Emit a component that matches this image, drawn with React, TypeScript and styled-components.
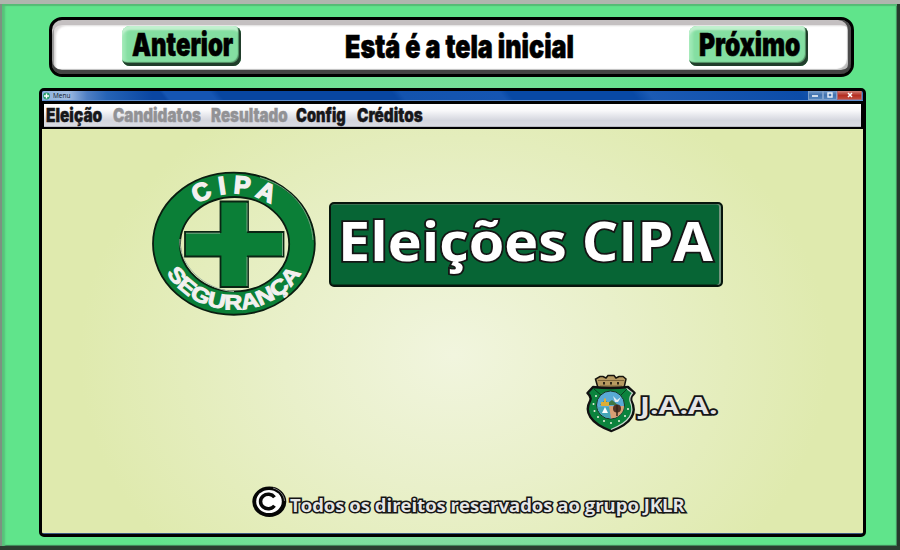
import React, { ReactNode, useLayoutEffect, useRef, useState } from 'react';
import styled, { createGlobalStyle } from 'styled-components';

const GlobalStyle = createGlobalStyle`
  * { box-sizing: border-box; }
  body { margin: 0; overflow: hidden; font-family: 'Open Sans', sans-serif; }
`;

const Page = styled.div`
  width: 900px;
  height: 550px;
  padding: 17px 34px 0 39px;
  background: radial-gradient(ellipse 400px 310px at 440px 330px, #a3d9b4 0%, #93d9ab 50%, #60e48b 100%);
  box-shadow: inset 0 4px 0 #b0b5ae, inset 0 -4px 0 #2b3d30, inset -3px 0 0 #26392b,
    inset 2px 0 0 #7b9381, inset 0 6px 1px #55bb75, inset 5px 0 2px #58c17a,
    inset 0 -5px 1px #3f7f55, inset -4px 0 1px #43885a;
`;

const Banner = styled.header`
  width: 805px;
  height: 60px;
  margin-left: 10px;
  padding: 6px 43px 0 70px;
  display: flex;
  justify-content: space-between;
  border: 3px solid #000;
  border-radius: 13px;
  background: #fff;
  box-shadow: inset 0 -4px 0 #434343, inset -3px 0 0 #4b4b4b, inset 0 5px 0 #c4c0c1,
    inset 2px 0 1px #969696, inset -4px -5px 1px #bdbdbd, inset 4px 6px 2px #dedcdc;
`;

const BevelButton = styled.button`
  width: 119px;
  height: 40px;
  padding: 0 0 3px 10px;
  border: 0;
  border-radius: 8px;
  text-align: left;
  background: #84dea1;
  box-shadow: inset -2px -3px 0 #213d2b, inset -3px -4px 1px #4d895f,
    inset 0 4px 2px #c1f0cf, inset 4px 0 3px #9ce8b4;
`;

const BannerTitle = styled.h1`
  margin: 3px 0 0 -12px;
  padding-top: 2px;
  width: 228px;
  line-height: 0;
`;

const FitBox = styled.span<{ $width: number; $size: number; $line: number }>`
  display: block;
  flex: none;
  width: ${p => p.$width}px;
  height: ${p => p.$line}px;
  line-height: ${p => p.$line}px;
  font-size: ${p => p.$size}px;
  white-space: nowrap;
`;

const FitInner = styled.span`
  display: inline-block;
  transform-origin: 0 50%;
`;

function Fit({ width, size, line, children }: { width: number; size: number; line: number; children: ReactNode }) {
  const ref = useRef<HTMLSpanElement>(null);
  const [scale, setScale] = useState(1);
  useLayoutEffect(() => {
    if (ref.current) setScale(width / ref.current.offsetWidth);
  }, [width, children]);
  return (
    <FitBox $width={width} $size={size} $line={line}>
      <FitInner ref={ref} style={{ transform: `scaleX(${scale})` }}>{children}</FitInner>
    </FitBox>
  );
}

const Heavy = styled.span`
  display: block;
  font-family: Inter, sans-serif;
  font-weight: 900;
  color: #000;
  -webkit-text-stroke: 0.6px #000;
`;

const Window = styled.main`
  width: 827px;
  height: 449px;
  margin-top: 11px;
  border: 3px solid #000;
  border-radius: 5px;
  background: #000;
  overflow: hidden;
`;

const TitleBar = styled.div`
  height: 10px;
  display: flex;
  align-items: center;
  padding-left: 1px;
  border-bottom: 1px solid #5f8fd0;
  background: linear-gradient(90deg, #8fb2df 0, #9fbce2 26px, #4f7fc4 45px, #2563b5 65px, transparent 110px),
    linear-gradient(52deg, #0a46a2 15%, #1555b2 15.5%, #1555b2 21%, #0846a1 22%, #0846a1 43%, #1353ae 44%,
      #1555b2 56%, #0849a5 57%, #0849a5 72%, #1b5ab4 74%, #0c4ca8 92%, #3c73bd 100%);
`;

const WindowName = styled.span`
  margin-left: 3px;
  flex: 1;
  font: 6.5px/9px 'Open Sans', sans-serif;
  color: #101828;
`;

const WindowControl = styled.span<{ $close?: boolean }>`
  width: ${p => (p.$close ? 25 : 14.5)}px;
  height: 9px;
  display: grid;
  place-items: center;
  align-self: flex-start;
  border: 1px solid ${p => (p.$close ? '#a96a78' : '#7da0cc')};
  border-top: 0;
  background: ${p => (p.$close ? 'linear-gradient(#cf8178, #b52e22 55%, #c04b3c)' : 'linear-gradient(#769dcc, #3f70ad 50%, #5385bd)')};
`;

const ControlEnd = styled.span`
  width: 1px;
`;

const MenuBar = styled.nav`
  height: 23px;
  margin: 3px 2px 2px 2px;
  padding: 0 0 0 2px;
  display: flex;
  border-bottom: 1px solid #b9bbc4;
  background: linear-gradient(#fff 0, #f8f8fa 30%, #d4d6de 75%, #dadbe2 100%);
`;

const MenuItem = styled.a<{ $disabled?: boolean; $gap: number }>`
  display: block;
  margin-right: ${p => p.$gap}px;
  font-family: Inter, sans-serif;
  font-weight: 900;
  color: ${p => (p.$disabled ? '#929295' : '#17171a')};
  -webkit-text-stroke: 0.4px currentColor;
`;

const Content = styled.section`
  height: 405px;
  padding: 42px 0 0 109px;
  border-bottom: 1px solid #3c5a83;
  background: radial-gradient(ellipse 375px 300px at 412px 226px, #f1f5de 0%, #e9f0ca 45%, #dfeaae 100%);
`;

const Hero = styled.div`
  display: flex;
  align-items: flex-start;
`;

const Plate = styled.div`
  width: 394px;
  height: 85px;
  margin: 31px 0 0 12px;
  padding: 4px 0 0 7px;
  border: 2px solid #07150c;
  border-radius: 5px;
  background: #076535;
  box-shadow: inset -2px 0 0 #74957f, inset 0 1px 0 #396f50, inset 0 -1px 0 #064021;
`;

const OutlinedText = styled.span<{ $stroke: number; $fill: string; $bold: number }>`
  display: block;
  font-family: 'Open Sans', sans-serif;
  font-weight: ${p => p.$bold};
  color: ${p => p.$fill};
  -webkit-text-stroke: ${p => p.$stroke}px #151515;
  paint-order: stroke fill;
`;

const Team = styled.div`
  display: flex;
  margin: 57px 0 0 435px;
  gap: 3px;
`;

const TeamName = styled.div`
  padding-top: 16px;
`;

const Footer = styled.footer`
  display: flex;
  gap: 3px;
  margin: 53px 0 0 101px;
`;

const FooterText = styled.div`
  padding-top: 7px;
`;

function SafetyLogo() {
  return (
    <svg width="166" height="146" viewBox="151 171 166 146">
      <defs>
        <path id="arcTop" d="M181 219.500 A60 49.5 0 0 1 286.6 219.500" />
        <path id="arcBottom" d="M162 263 A75.5 67.5 0 0 0 305.6 263" />
      </defs>
      <path
        fillRule="evenodd"
        fill="#0b7f37"
        stroke="#0a1d10"
        strokeWidth="1.8"
        d="M153 243.7a80.9 71 0 1 0 161.8 0a80.9 71 0 1 0-161.8 0ZM180 244.2a54.6 47.2 0 1 0 109.2 0a54.6 47.2 0 1 0-109.2 0Z"
      />
      <path d="M260 177.500C293 187 311 212 313 240" fill="none" stroke="#6f9d7b" strokeWidth="1" />
      <path d="M180 239C178 264 204 290 234 291.500" fill="none" stroke="#a5b9a5" strokeWidth="1" />
      <path d="M220.500 201.500H248V232H283.500V256.500H248V287H220.500V256.500H185V232H220.500Z" fill="#0b7f37" stroke="#0a2513" strokeWidth="1.800" />
      <path d="M247 203V231.500M282.500 233V256M247 257V286M186 233.200H220" fill="none" stroke="#79a584" strokeWidth="1" />
      <g fill="#f3f0ef" stroke="#f3f0ef" strokeWidth="1.5" fontFamily="'Liberation Sans', sans-serif" fontWeight="700" fontSize="25">
        <text textAnchor="middle" textLength="78" lengthAdjust="spacing">
          <textPath href="#arcTop" startOffset="50%">CIPA</textPath>
        </text>
        <text textAnchor="middle" fontSize="21" strokeWidth="0.9" textLength="160" lengthAdjust="spacingAndGlyphs">
          <textPath href="#arcBottom" startOffset="50%">SEGURANÇA</textPath>
        </text>
      </g>
    </svg>
  );
}

function Shield() {
  return (
    <svg width="51" height="59" viewBox="586 374 51 59">
      <path d="M598 388 595.500 379 600 376.500H603L606 378 608 375.500H614L616 378 619 376.500H623L626 379 624 388Z" fill="#b69a61" stroke="#17140d" strokeWidth="1.500" />
      <path d="M598 380.500H624M600 386H622" stroke="#7c6439" strokeWidth="1" />
      <path d="M604 382v2.500M611 382v2.500M618 382v2.500" stroke="#211a10" strokeWidth="1.800" />
      <path d="M593 387Q611 389 628 387L634.500 393Q630 397 631.500 401C637 412 633 423 611 431C590 423 584 412 590 401Q592 397 587.500 393Z" fill="#0b833d" stroke="#111" strokeWidth="2.400" strokeLinejoin="round" />
      <path d="M626.500 388.500L632.500 393Q629 397 630 401C635 413 630 422 611 429.500" fill="none" stroke="#c8d4cc" strokeWidth="1.200" />
      <path d="M594 389 602 396M627 389 620 396" stroke="#07401e" strokeWidth="1" />
      <circle cx="610.500" cy="405" r="14" fill="#59aad6" stroke="#18331f" strokeWidth="1" />
      <path d="M597.500 407H611V418.500C604 418 598 413 597.500 407Z" fill="#46a6b8" />
      <path d="M609 406H624C624 412 619 418 611 418.500Z" fill="#d99f74" />
      <path d="M600 405 605 400 608 403 612 400 618 405Z" fill="#407944" />
      <path d="M601 406V402H604V398.500H606V402H609V406Z" fill="#dcae38" />
      <path d="M613 396 617 400 621 397 618 402H615Z" fill="#e6edf0" />
      <circle cx="617" cy="408.500" r="4" fill="#513326" />
      <path d="M617 405V416" stroke="#352419" strokeWidth="1.500" />
      <path d="M602 413 605 407 608 413Z" fill="#fff" />
      <g fill="#e9f2df">
        <circle cx="596" cy="396" r="1" /><circle cx="593.500" cy="404" r="1" />
        <circle cx="594.500" cy="411" r="1" /><circle cx="598" cy="417" r="1" />
        <circle cx="604" cy="421" r="1" /><circle cx="611" cy="423" r="1" />
        <circle cx="619" cy="421" r="1" /><circle cx="625" cy="416" r="1" />
        <circle cx="628" cy="409" r="1" />
      </g>
    </svg>
  );
}

function CopyrightMark() {
  return (
    <svg width="35" height="32" viewBox="0 0 35 32">
      <ellipse cx="17.300" cy="15.700" rx="17" ry="15.300" fill="#050505" />
      <ellipse cx="17" cy="15.500" rx="12.800" ry="11.500" fill="#fff" />
      <path d="M22.500 11.300A7.700 7.200 0 1 0 22.500 19.700" fill="none" stroke="#080808" strokeWidth="3.500" />
      <path d="M21 2C28 4 32 9 32.500 15" fill="none" stroke="#8b8b8b" strokeWidth=".9" />
    </svg>
  );
}

const menu = [
  { label: 'Eleição', width: 56, gap: 11 },
  { label: 'Candidatos', width: 88, gap: 10, disabled: true },
  { label: 'Resultado', width: 77, gap: 8, disabled: true },
  { label: 'Config', width: 50, gap: 11 },
  { label: 'Créditos', width: 66, gap: 0 },
];

export default function App() {
  return (
    <Page>
      <GlobalStyle />
      <Banner>
        <BevelButton><Heavy><Fit width={101} size={32} line={31}>Anterior</Fit></Heavy></BevelButton>
        <BannerTitle><Heavy><Fit width={229} size={32} line={31}>Está é a tela inicial</Fit></Heavy></BannerTitle>
        <BevelButton><Heavy><Fit width={101} size={32} line={31}>Próximo</Fit></Heavy></BevelButton>
      </Banner>
      <Window>
        <TitleBar>
          <svg width="7" height="8" viewBox="0 0 7 8">
            <circle cx="3.500" cy="4" r="3.400" fill="#259e68" />
            <path d="M3.500 1.500V6.500M1 4H6" stroke="#fff" strokeWidth="1.400" />
          </svg>
          <WindowName>Menu</WindowName>
          <WindowControl><svg width="6" height="6"><path d="M0 4H6" stroke="#fff" strokeWidth="1.600" /></svg></WindowControl>
          <WindowControl><svg width="6" height="6"><rect x="1" y="1" width="4" height="4" fill="none" stroke="#eef3fa" strokeWidth="1.400" /></svg></WindowControl>
          <WindowControl $close><svg width="6" height="6"><path d="M1 1 5 5M5 1 1 5" stroke="#fff" strokeWidth="1.500" /></svg></WindowControl>
          <ControlEnd />
        </TitleBar>
        <MenuBar>
          {menu.map(m => (
            <MenuItem key={m.label} $disabled={m.disabled} $gap={m.gap}>
              <Fit width={m.width} size={19} line={24}>{m.label}</Fit>
            </MenuItem>
          ))}
        </MenuBar>
        <Content>
          <Hero>
            <SafetyLogo />
            <Plate>
              <OutlinedText $stroke={3.500} $fill="#fff" $bold={700}>
                <Fit width={375} size={53} line={66}>Eleições CIPA</Fit>
              </OutlinedText>
            </Plate>
          </Hero>
          <Team>
            <Shield />
            <TeamName>
              <OutlinedText $stroke={3.500} $fill="#e4e4e4" $bold={700}>
                <Fit width={78} size={24} line={30}>J.A.A.</Fit>
              </OutlinedText>
            </TeamName>
          </Team>
          <Footer>
            <CopyrightMark />
            <FooterText>
              <OutlinedText $stroke={3} $fill="#e6e6e6" $bold={700}>
                <Fit width={395} size={17} line={25}>Todos os direitos reservados ao grupo JKLR</Fit>
              </OutlinedText>
            </FooterText>
          </Footer>
        </Content>
      </Window>
    </Page>
  );
}
